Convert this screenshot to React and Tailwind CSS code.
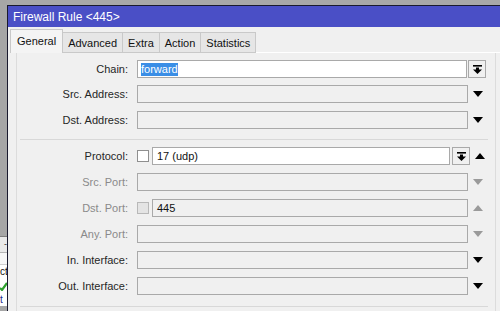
const Down = ({ gray }) => (
  <svg width="10" height="6" viewBox="0 0 10 6">
    <polygon points="0,0 10,0 5,6" fill={gray ? "#9a9a9a" : "#000"} />
  </svg>
);

const Up = ({ gray }) => (
  <svg width="10" height="6" viewBox="0 0 10 6">
    <polygon points="0,6 10,6 5,0" fill={gray ? "#9a9a9a" : "#000"} />
  </svg>
);

const BarDown = () => (
  <svg width="9" height="9" viewBox="0 0 9 9">
    <rect x="0" y="0" width="9" height="1.6" fill="#000" />
    <rect x="3" y="2.5" width="3" height="2.5" fill="#000" />
    <polygon points="0,4.5 9,4.5 4.5,9" fill="#000" />
  </svg>
);

const Tab = ({ label, active }) =>
  active ? (
    <div className="h-[24px] px-[6px] pt-[3px] bg-[#f4f4f4] border-l border-t border-r border-[#c8c8c8] text-[#111]">
      {label}
    </div>
  ) : (
    <div className="h-[21px] px-[5px] pt-[2px] bg-[#e6e6e6] border-t border-r border-b border-[#c9c9c9] text-[#111]">
      {label}
    </div>
  );

const Label = ({ text, gray }) => (
  <div
    className={`w-[111px] text-right leading-[18px] ${
      gray ? "text-[#8a8a8a]" : "text-[#262626]"
    }`}
  >
    {text}
  </div>
);

const Field = ({ w, white, children }) => (
  <div
    className={`h-[18px] border border-[#a9a9a9] pl-[4px] leading-[16px] text-[#111] ${
      white ? "bg-white" : "bg-[#f0f0f0]"
    } ${w}`}
  >
    {children}
  </div>
);

const Arrow = ({ children }) => (
  <div className="w-[19px] h-[18px] flex items-center justify-center pl-[1px]">
    {children}
  </div>
);

const Row = ({ label, gray, mt, arrow, children }) => (
  <div className={`flex h-[18px] ${mt}`}>
    <Label text={label} gray={gray} />
    <div className="ml-[9px] flex">{children}</div>
    {arrow}
  </div>
);

export default function App() {
  return (
    <div className="w-[500px] h-[311px] overflow-hidden flex bg-[#a8a8a8] font-['Liberation_Sans',Arial,sans-serif] text-[11px]">
      {/* window behind */}
      <div className="w-[7px] flex flex-col shrink-0 overflow-hidden">
        <div className="h-[236px] bg-[#a6a6a6]" />
        <div className="h-[1px] bg-[#7d7d7d]" />
        <div className="h-[16px] bg-[#e9e9e9] border-b border-[#b5b5b5] text-[9px] leading-[14px] text-right text-[#333]">
          -
        </div>
        <div className="h-[12px] bg-[#f7f7f7] border-b border-[#cfcfcf]" />
        <div className="h-[14px] bg-white text-[10px] leading-[14px] text-[#111] whitespace-nowrap">ct</div>
        <div className="h-[14px] bg-white flex items-center">
          <svg width="7" height="10" viewBox="0 0 7 10">
            <path d="M0 7 L2 9 L7 2" stroke="#2fa12f" strokeWidth="2.2" fill="none" />
          </svg>
        </div>
        <div className="h-[13px] bg-white text-[10px] leading-[13px] text-[#1a2a8a]">t</div>
        <div className="flex-1 bg-[#a6a6a6]" />
      </div>

      <div className="flex-1 flex flex-col">
        <div className="h-[5px] bg-[#a8a8a8]" />
        <div className="flex-1 flex flex-col border-l border-t border-[#1a1a2e] bg-[#f0f0f0]">
          {/* title bar */}
          <div className="h-[21px] bg-[#4a4fc6] text-white pl-[5px] text-[12px] leading-[22px]">
            Firewall Rule &lt;445&gt;
          </div>

          {/* tabs */}
          <div className="h-[26px] flex items-end">
            <div className="w-[2px] h-[1px]" />
            <Tab label="General" active />
            <Tab label="Advanced" />
            <Tab label="Extra" />
            <Tab label="Action" />
            <Tab label="Statistics" />
            <div className="flex-1 h-[1px] bg-white" />
          </div>

          {/* panel */}
          <div className="ml-[8px] w-[480px] flex-1 border-l border-r border-[#dcdcdc] pt-[7px]">
            <Row
              label="Chain:"
              mt=""
              arrow={
                <div className="ml-[1px] w-[18px] h-[18px] border border-[#a9a9a9] bg-[#f0f0f0] flex items-center justify-center">
                  <BarDown />
                </div>
              }
            >
              <Field w="w-[330px]" white>
                <span className="bg-[#3a8ee6] text-white -ml-[1px] inline-block leading-[13px]">
                  forward
                </span>
              </Field>
            </Row>
            <Row label="Src. Address:" mt="mt-[7px]" arrow={<Arrow><Down /></Arrow>}>
              <Field w="w-[331px]" />
            </Row>
            <Row label="Dst. Address:" mt="mt-[8px]" arrow={<Arrow><Down /></Arrow>}>
              <Field w="w-[331px]" />
            </Row>

            <div className="mt-[10px] ml-[3px] mr-[7px] h-[1px] bg-[#d8d8d8]" />

            <Row label="Protocol:" mt="mt-[7px]" arrow={<Arrow><Up /></Arrow>}>
              <div className="w-[12px] h-[12px] mt-[3px] border border-[#8f8f8f] bg-white" />
              <div className="ml-[3px] flex">
                <Field w="w-[298px]" white>
                  17 (udp)
                </Field>
                <div className="ml-[2px] w-[18px] h-[18px] border border-[#a9a9a9] bg-[#f0f0f0] flex items-center justify-center">
                  <BarDown />
                </div>
              </div>
            </Row>
            <Row label="Src. Port:" gray mt="mt-[8px]" arrow={<Arrow><Down gray /></Arrow>}>
              <Field w="w-[331px]" />
            </Row>
            <Row label="Dst. Port:" gray mt="mt-[8px]" arrow={<Arrow><Up gray /></Arrow>}>
              <div className="w-[12px] h-[12px] mt-[3px] border border-[#b8b8b8] bg-[#e4e4e4]" />
              <div className="ml-[3px]">
                <Field w="w-[316px]">445</Field>
              </div>
            </Row>
            <Row label="Any. Port:" gray mt="mt-[8px]" arrow={<Arrow><Down gray /></Arrow>}>
              <Field w="w-[331px]" />
            </Row>
            <Row label="In. Interface:" mt="mt-[8px]" arrow={<Arrow><Down /></Arrow>}>
              <Field w="w-[331px]" />
            </Row>
            <Row label="Out. Interface:" mt="mt-[8px]" arrow={<Arrow><Down /></Arrow>}>
              <Field w="w-[331px]" />
            </Row>

            <div className="mt-[11px] ml-[3px] mr-[7px] h-[1px] bg-[#d8d8d8]" />
          </div>
        </div>
      </div>
    </div>
  );
}
